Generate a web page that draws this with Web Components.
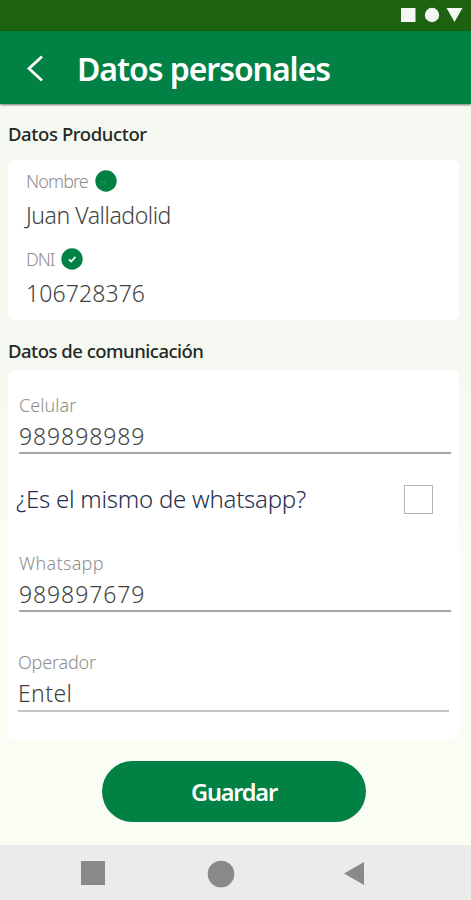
<!DOCTYPE html>
<html lang="es">
<head>
<meta charset="utf-8">
<title>Datos personales</title>
<style>
  body {
    margin: 0;
    background: #f9fdf4;
    font-family: "Noto Sans", "Open Sans", sans-serif;
  }
</style>
</head>
<body>
<app-screen>
  <status-bar slot="top"></status-bar>
  <title-bar slot="top">Datos personales</title-bar>

  <section-title style="--ls: -.4px">Datos Productor</section-title>
  <data-card class="producer">
    <info-field label="Nombre" badge="dot" style="--label-ls: -.9px; --ls: -.45px">Juan Valladolid</info-field>
    <info-field label="DNI" badge="check" style="--label-ls: -1.1px; --ls: .1px">106728376</info-field>
  </data-card>

  <section-title style="--ls: -.5px">Datos de comunicación</section-title>
  <data-card class="contact">
    <text-field label="Celular" style="--ls: .9px; --label-ls: .05px">989898989</text-field>
    <check-row>¿Es el mismo de whatsapp?</check-row>
    <text-field label="Whatsapp" style="--ls: .9px; --label-ls: .3px">989897679</text-field>
    <text-field label="Operador" class="operator" style="--ls: .4px; --label-ls: -.2px">Entel</text-field>
  </data-card>

  <pill-button slot="bottom">Guardar</pill-button>
  <nav-bar slot="bottom"></nav-bar>
</app-screen>

<script>
// small base class, every element only gives its markup
class BaseElement extends HTMLElement {
  constructor() {
    super();
    this.attachShadow({ mode: "open" });
  }

  connectedCallback() {
    this.shadowRoot.innerHTML = `${this.CSS()}\n${this.HTML()}`;
  }
}

class AppScreen extends BaseElement {
  CSS() {
    return `<style>
    :host {
      display: flex;
      flex-direction: column;
      height: 900px;
      overflow: hidden;
      background: linear-gradient(#f6f9f1 104px, #f4f8f0 330px, #f9fdf4 560px);
    }
    main {
      flex: 1;
      padding: 0 12px 0 8px;
    }
    ::slotted(.producer) {
      height: 160px;
      padding: 7px 18px 0;
    }
    ::slotted(.contact) {
      height: 369px;
      padding: 21px 8px 0 11px;
    }
  </style>`;
  }

  HTML() {
    return `<slot name="top"></slot><main><slot></slot></main><slot name="bottom"></slot>`;
  }
}

class StatusBar extends BaseElement {
  CSS() {
    return `<style>
    :host {
      display: flex;
      justify-content: flex-end;
      height: 31px;
      background: #1c620f;
    }
  </style>`;
  }

  HTML() {
    return `<svg width="71" height="31" fill="#f4f6f3">
      <rect x="1" y="8" width="14.5" height="14"/>
      <circle cx="32" cy="15" r="7.2"/>
      <path d="M46.5 8h16l-8 14z"/>
    </svg>`;
  }
}

class TitleBar extends BaseElement {
  CSS() {
    return `<style>
    :host {
      display: flex;
      align-items: center;
      height: 73px;
      flex: none;
      padding-left: 25px;
      background: #028144;
      box-shadow: 0 1px 2px #0008;
      color: #fff;
    }
    svg { margin-right: 32px; }
    h1 {
      margin: 3px 0 0;
      font-size: 32px;
      font-weight: 600;
      line-height: 44px;
      letter-spacing: -1.05px;
      white-space: nowrap;
    }
  </style>`;
  }

  HTML() {
    return `<svg width="20" height="30" fill="none" stroke="#fff" stroke-width="2.8"><path d="M17 3.5 4 15.5 17 27.5"/></svg>
      <h1><slot></slot></h1>`;
  }
}

class SectionTitle extends BaseElement {
  CSS() {
    return `<style>
    :host {
      display: flex;
      align-items: center;
      height: 50px;
      color: #252825;
      font-size: 18.5px;
      font-weight: 500;
      letter-spacing: var(--ls, 0);
      white-space: nowrap;
    }
    :host(:first-of-type) { height: 56px; }
    span { margin-top: 10px; }
    :host(:first-of-type) span { margin-top: 2px; }
  </style>`;
  }

  HTML() {
    return `<span><slot></slot></span>`;
  }
}

class DataCard extends BaseElement {
  CSS() {
    return `<style>
    :host {
      display: block;
      box-sizing: border-box;
      background: #fefffe;
      border-radius: 6px;
    }
  </style>`;
  }

  HTML() {
    return `<slot></slot>`;
  }
}

class InfoField extends BaseElement {
  CSS() {
    return `<style>
    :host {
      display: block;
      height: 78px;
      color: #414141;
      font-size: 23px;
      font-weight: 350;
      line-height: 40px;
      letter-spacing: var(--ls, 0);
      white-space: nowrap;
    }
    .label {
      display: flex;
      align-items: center;
      gap: 7px;
      height: 28px;
      color: #8e8e8e;
      font-size: 18px;
      letter-spacing: var(--label-ls, 0);
    }
  </style>`;
  }

  badge() {
    let mark = this.getAttribute("badge") == "check"
      ? `<path d="m8 11.3 2.2 2.2 4.3-4.6" stroke="#e9fff0" stroke-width="1.8"/>`
      : `<path d="M6.5 11.8h1.2m1 .6h2" stroke="#3fa565"/>`;
    return `<svg width="22" height="22" fill="none"><circle cx="11" cy="11" r="10.7" fill="#028144"/>${mark}</svg>`;
  }

  HTML() {
    return `<div class="label"><span>${this.getAttribute("label")}</span>${this.badge()}</div><slot></slot>`;
  }
}

class TextField extends BaseElement {
  CSS() {
    return `<style>
    :host {
      display: block;
      height: 61px;
      border-bottom: 2px solid #a6a6a6;
      color: #414141;
      font-size: 23px;
      font-weight: 350;
      line-height: 34px;
      letter-spacing: var(--ls, 0);
      white-space: nowrap;
    }
    :host(.operator) {
      height: 62px;
      margin: 36px 2px 0 -1px;
      border-color: #c4c4c4;
    }
    .label {
      color: #8e8e8e;
      font-size: 18px;
      line-height: 28px;
      letter-spacing: var(--label-ls, 0);
    }
  </style>`;
  }

  HTML() {
    return `<div class="label">${this.getAttribute("label")}</div><slot></slot>`;
  }
}

class CheckRow extends BaseElement {
  CSS() {
    return `<style>
    :host {
      display: flex;
      align-items: center;
      justify-content: space-between;
      box-sizing: border-box;
      height: 95px;
      margin-left: -3px;
      padding: 0 18px 4px 0;
      color: #26304e;
      font-size: 24px;
      font-weight: 350;
      letter-spacing: -.25px;
      white-space: nowrap;
    }
    span { margin-bottom: 2px; }
    i {
      box-sizing: border-box;
      width: 29px;
      height: 29px;
      border: 1px solid #b5b5b5;
    }
  </style>`;
  }

  HTML() {
    return `<span><slot></slot></span><i></i>`;
  }
}

class PillButton extends BaseElement {
  CSS() {
    return `<style>
    :host {
      display: block;
      height: 84px;
      padding-left: 102px;
    }
    button {
      display: block;
      width: 264px;
      height: 61px;
      padding: 0;
      border: 0;
      border-radius: 31px;
      background: #028144;
      color: #fff;
      font: 600 23.5px "Noto Sans", "Open Sans", sans-serif;
      letter-spacing: -1.2px;
    }
  </style>`;
  }

  HTML() {
    return `<button><slot></slot></button>`;
  }
}

class NavBar extends BaseElement {
  CSS() {
    return `<style>
    :host {
      display: block;
      height: 55px;
      background: #ebebeb;
    }
  </style>`;
  }

  HTML() {
    return `<svg width="471" height="55" fill="#8a8989">
      <rect x="81" y="16" width="24" height="24"/>
      <circle cx="221" cy="29" r="13.3"/>
      <path d="M364 17v23l-20-11.5z"/>
    </svg>`;
  }
}

customElements.define('app-screen', AppScreen);
customElements.define('status-bar', StatusBar);
customElements.define('title-bar', TitleBar);
customElements.define('section-title', SectionTitle);
customElements.define('data-card', DataCard);
customElements.define('info-field', InfoField);
customElements.define('text-field', TextField);
customElements.define('check-row', CheckRow);
customElements.define('pill-button', PillButton);
customElements.define('nav-bar', NavBar);
</script>
</body>
</html>
